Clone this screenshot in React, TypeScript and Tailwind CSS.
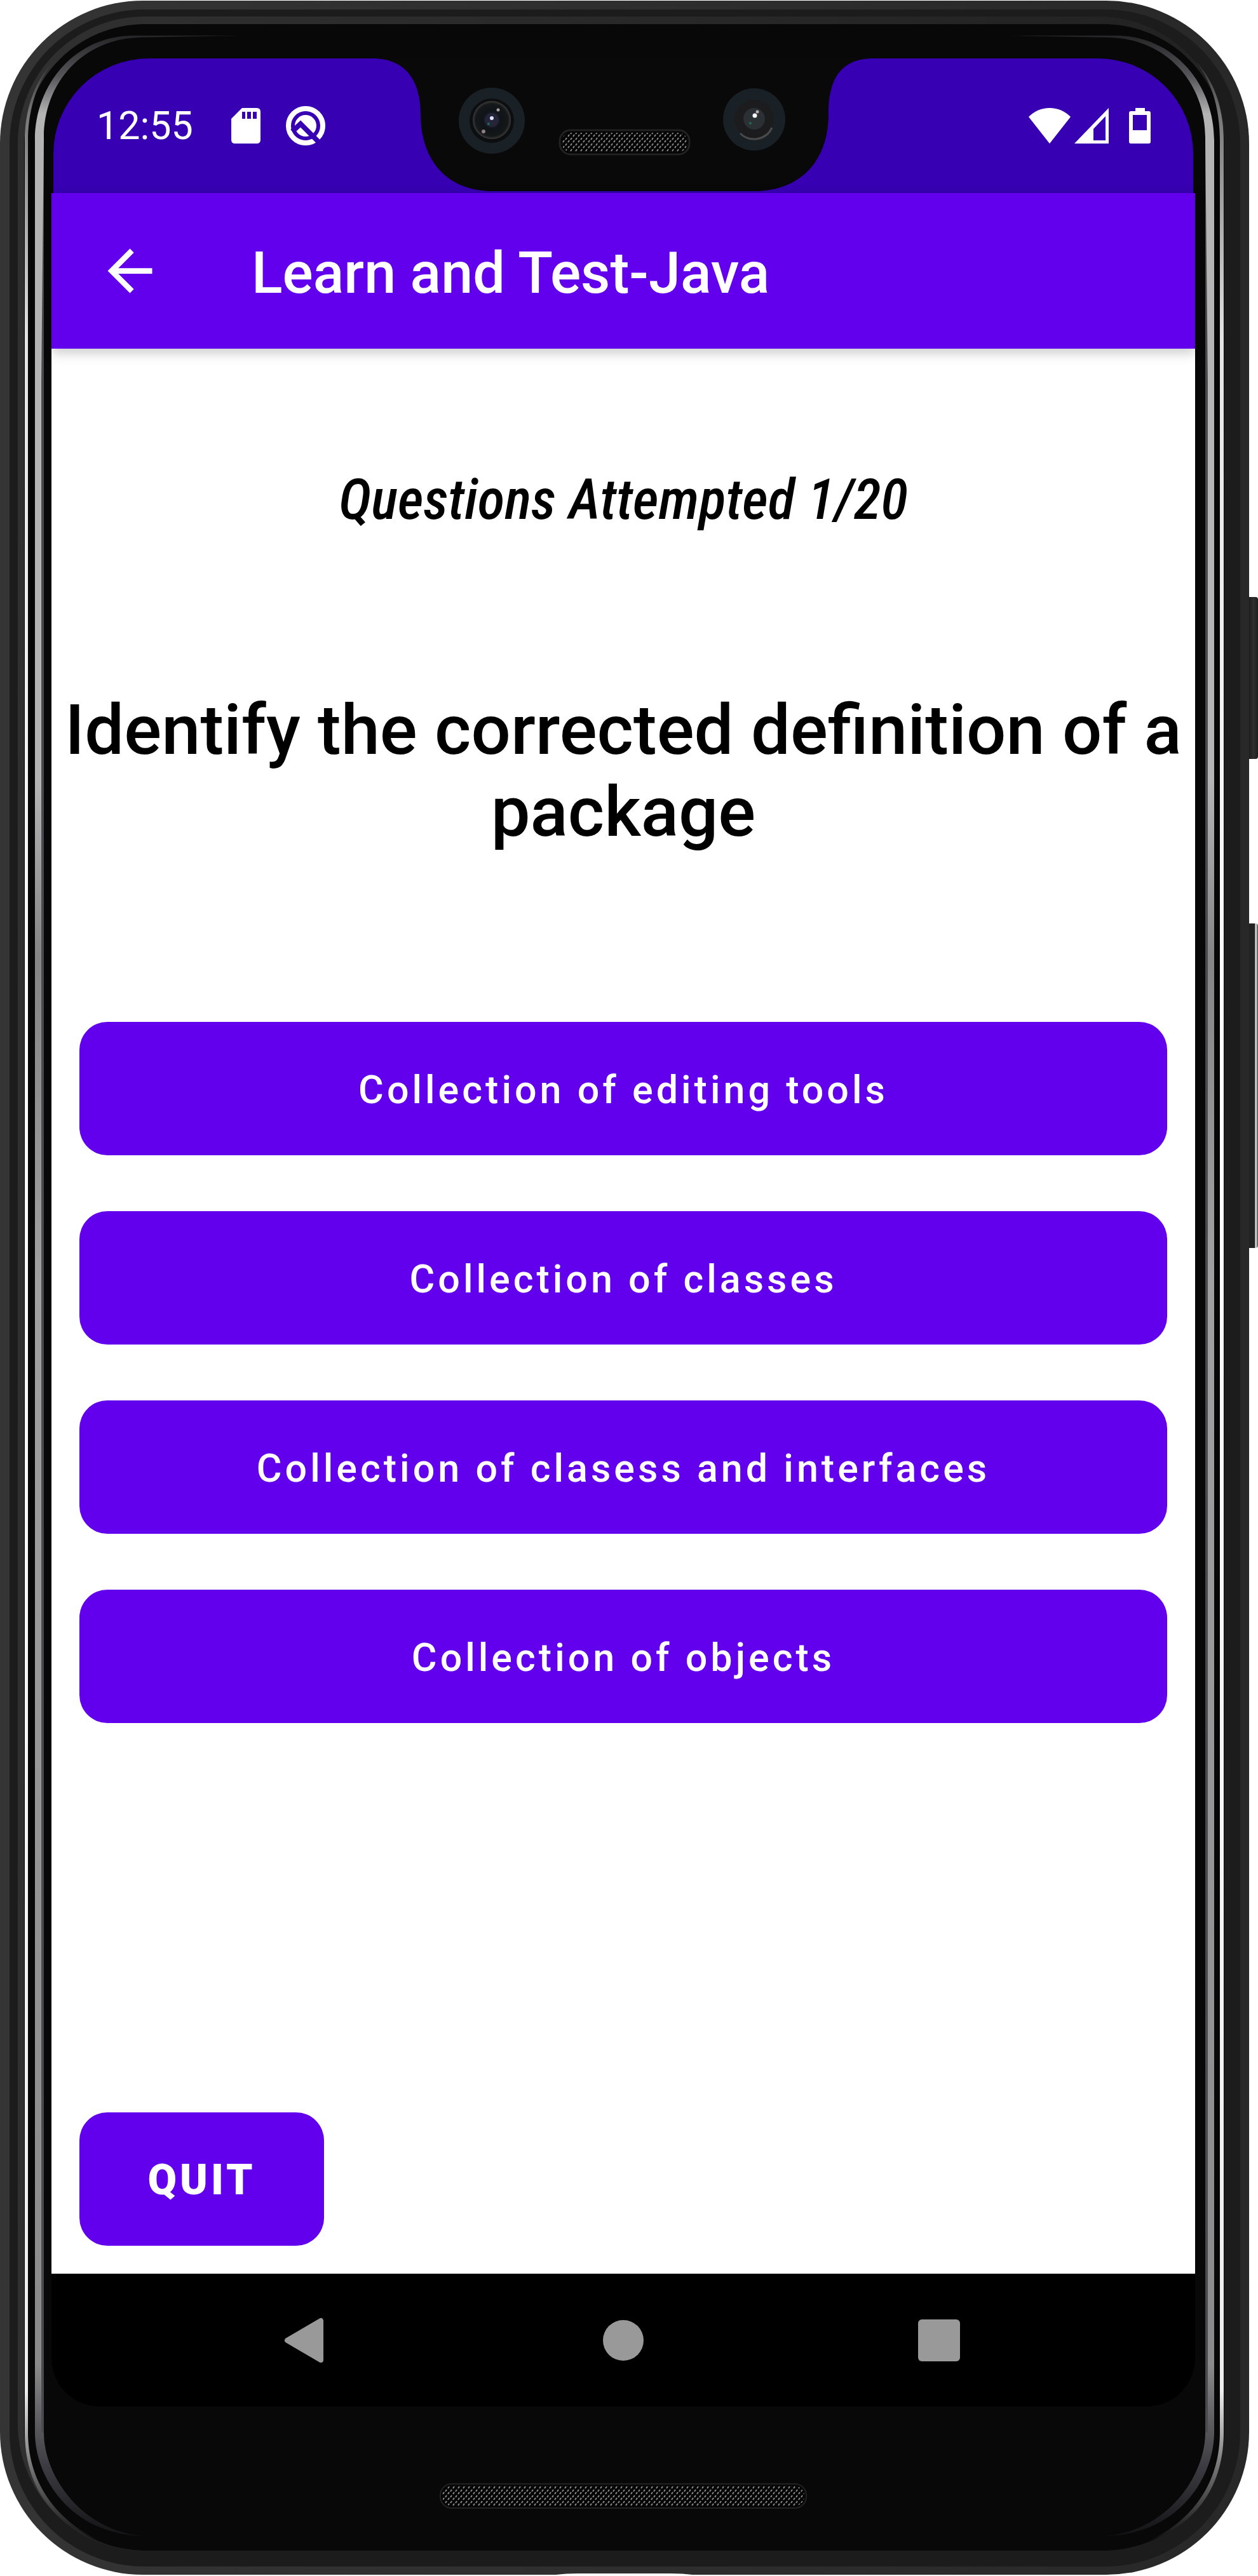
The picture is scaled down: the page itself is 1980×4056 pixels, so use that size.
const answers = [
  "Collection of editing tools",
  "Collection of classes",
  "Collection of clasess and interfaces",
  "Collection of objects",
];

function SdCardIcon() {
  return (
    <svg viewBox="0 0 46 56" className="h-14 w-[46px]" aria-hidden="true">
      <path
        fillRule="evenodd"
        fill="#fff"
        d="M17 0H40Q46 0 46 6V50Q46 56 40 56H6Q0 56 0 50V17ZM17 6V17H22V6ZM25 6V17H31V6ZM34 6V17H40V6Z"
      />
    </svg>
  );
}

function QIcon() {
  return (
    <svg viewBox="0 0 64 64" className="size-16" aria-hidden="true">
      <circle cx="31" cy="32" r="27" fill="none" stroke="#fff" strokeWidth="8" />
      <circle cx="31" cy="32" r="17" fill="#fff" />
      <path d="M10 41L23 29L52 58" fill="none" stroke="#3700b3" strokeWidth="8" />
    </svg>
  );
}

function WifiIcon() {
  return (
    <svg viewBox="0 0 66 56" className="h-14 w-[66px]" aria-hidden="true">
      <path d="M33 56L0 14Q14 0 33 0T66 14Z" fill="#fff" />
    </svg>
  );
}

function SignalIcon() {
  return (
    <svg viewBox="0 0 54 56" className="h-14 w-[54px]" aria-hidden="true">
      <path fillRule="evenodd" d="M54 0V56H0ZM49 13L30 33V51H49Z" fill="#fff" />
    </svg>
  );
}

function BatteryIcon() {
  return (
    <svg viewBox="0 0 34 56" className="h-14 w-[34px]" aria-hidden="true">
      <path
        fillRule="evenodd"
        fill="#fff"
        d="M10 0H25V5H31Q34 5 34 8V53Q34 56 31 56H3Q0 56 0 53V8Q0 5 3 5H10ZM6 11V35H28V11Z"
      />
    </svg>
  );
}

function Notch() {
  return (
    <svg viewBox="585 92 792 212" className="h-[212px] w-[792px] shrink-0" aria-hidden="true">
      <defs>
        <pattern id="mesh" width="8" height="9" patternUnits="userSpaceOnUse">
          <path d="M1 4L3 1M5 8L7 5" stroke="#8a8a8a" strokeWidth="2" />
        </pattern>
        <radialGradient id="lens">
          <stop offset="0" stopColor="#2a2a3a" />
          <stop offset="0.5" stopColor="#0f1418" />
          <stop offset="0.85" stopColor="#141819" />
          <stop offset="1" stopColor="#3a3a3a" />
        </radialGradient>
      </defs>
      <path
        d="M585 92C640 92 661 130 661 180C661 250 700 301 775 301H1185C1262 301 1303 250 1303 180C1303 130 1318 92 1374 92Z"
        fill="#090909"
      />
      <circle cx="773" cy="190" r="52" fill="#1a2126" />
      <circle cx="773" cy="190" r="35" fill="#0c0e10" />
      <circle cx="773" cy="189" r="30" fill="url(#lens)" />
      <circle cx="773" cy="189" r="11" fill="#25253a" />
      <circle cx="773" cy="186" r="3" fill="#dfe3ff" />
      <circle cx="783" cy="173" r="2.5" fill="#a89c9c" />
      <circle cx="760" cy="207" r="3" fill="#8f8080" />
      <circle cx="768" cy="195" r="2" fill="#1f6a58" />
      <circle cx="1186" cy="188" r="49" fill="#1a2126" />
      <circle cx="1186" cy="188" r="31" fill="#1c1c1e" />
      <path d="M1164 210A31 31 0 0 0 1214 201" fill="none" stroke="#4a4a4a" strokeWidth="3" />
      <circle cx="1186" cy="187" r="17" fill="#2b3034" />
      <circle cx="1187" cy="182" r="3.5" fill="#fff" />
      <circle cx="1191" cy="176" r="2.5" fill="#b8acac" />
      <circle cx="1180" cy="194" r="2" fill="#1f6a58" />
      <rect x="880" y="205" width="204" height="38" rx="17" fill="#050505" stroke="#222" strokeWidth="3" />
      <rect x="883" y="209" width="198" height="30" rx="14" fill="url(#mesh)" />
    </svg>
  );
}

/* Reflections that run down both long edges of the glass. */
function EdgeGlints() {
  return (
    <svg
      viewBox="0 0 1966 4054"
      preserveAspectRatio="none"
      className="pointer-events-none absolute inset-0 size-full"
      aria-hidden="true"
    >
      <defs>
        <linearGradient id="fade" gradientUnits="userSpaceOnUse" x1="0" y1="40" x2="0" y2="4000">
          <stop offset="0" stopColor="#1a1a1c" />
          <stop offset="0.02" stopColor="#55555a" />
          <stop offset="0.035" stopColor="#b4b4b4" />
          <stop offset="0.3" stopColor="#b4b4b4" />
          <stop offset="0.37" stopColor="#858585" />
          <stop offset="0.5" stopColor="#a0a0a0" />
          <stop offset="0.93" stopColor="#8a8a8a" />
          <stop offset="0.97" stopColor="#3c3c42" />
          <stop offset="1" stopColor="#111114" />
        </linearGradient>
        <linearGradient id="thin" gradientUnits="userSpaceOnUse" x1="0" y1="60" x2="0" y2="4000">
          <stop offset="0" stopColor="#161616" />
          <stop offset="0.03" stopColor="#777" />
          <stop offset="0.12" stopColor="#e4e4e4" />
          <stop offset="0.4" stopColor="#fff" />
          <stop offset="0.94" stopColor="#eee" />
          <stop offset="0.97" stopColor="#777" />
          <stop offset="1" stopColor="#111" />
        </linearGradient>
      </defs>
      <path
        d="M380 55H210C120 55 55 130 55 220V3830C55 3900 110 3990 225 3993C130 3985 69 3900 69 3830V215C69 130 130 60 220 58Z"
        fill="url(#fade)"
      />
      <path
        d="M1586 55H1756C1846 55 1911 130 1911 220V3830C1911 3900 1856 3990 1741 3993C1836 3985 1897 3900 1897 3830V215C1897 130 1836 60 1746 58Z"
        fill="url(#fade)"
      />
      <path d="M69 220V3830H65V600ZM1897 220V3830H1901V600Z" fill="#4a4a4e" />
      <path
        d="M85 95C50 130 39 180 39 220V3830C39 3900 70 3970 160 4002C80 3965 44 3900 44 3830V220C44 180 55 130 85 95Z"
        fill="url(#thin)"
      />
      <path
        d="M1881 95C1916 130 1926 180 1926 220V3830C1926 3900 1896 3970 1806 4002C1886 3965 1920 3900 1920 3830V220C1920 180 1911 130 1881 95Z"
        fill="url(#thin)"
      />
      <path d="M875 4054Q890 4052 910 4052H1055Q1075 4052 1090 4054Z" fill="#fff" />
    </svg>
  );
}

function SpeakerGrille() {
  return (
    <svg viewBox="0 0 578 40" className="h-10 w-[578px]" aria-hidden="true">
      <rect x="1" y="1" width="576" height="38" rx="18" fill="#050505" stroke="#222" strokeWidth="2" />
      <rect x="4" y="4" width="570" height="32" rx="16" fill="url(#mesh)" />
    </svg>
  );
}

function StatusBar() {
  return (
    <div className="mx-[3px] flex h-[212px] items-stretch overflow-hidden rounded-t-[150px] bg-[#3700b3]">
      <div className="flex flex-1 items-center pl-[68px]">
        <span className="text-[61px] leading-none text-white">12:55</span>
        <div className="ml-15 flex items-center gap-10">
          <SdCardIcon />
          <QIcon />
        </div>
      </div>
      <Notch />
      <div className="flex flex-1 items-center justify-end pr-[67px]">
        <WifiIcon />
        <span className="ml-1.5">
          <SignalIcon />
        </span>
        <span className="ml-8">
          <BatteryIcon />
        </span>
      </div>
    </div>
  );
}

export default function App() {
  return (
    <div className="flex bg-white py-px font-['Roboto',sans-serif]">
      <div className="relative min-w-0 flex-1 rounded-[225px] bg-linear-to-r from-[#343434] to-[#282828] pt-3.5 pr-3.5 pb-[13px] pl-[15px]">
        <div className="rounded-[212px] bg-[#1c1c1c] pt-[11px] pr-6 pb-[25px] pl-[13px]">
          <div className="rounded-[200px] bg-linear-to-r from-[#303030] to-[#222] pt-3 pr-px pl-2.5">
            <div className="rounded-[190px] bg-[#080808] pt-[54px] pr-[46px] pl-[43px]">
              <StatusBar />

              <header className="relative z-10 flex h-[245px] items-center bg-[#6200ee] pl-[71px] shadow-[0_6px_18px_rgba(0,0,0,0.22)]">
                <button type="button" aria-label="Back" className="size-[105px]">
                  <svg viewBox="0 0 24 24" className="size-full" aria-hidden="true">
                    <path d="M20 11H7.83l5.59-5.59L12 4l-8 8 8 8 1.41-1.41L7.83 13H20v-2z" fill="#fff" />
                  </svg>
                </button>
                <h1 className="ml-[139px] pt-2 text-[90px] leading-none font-medium text-white">
                  Learn and Test-Java
                </h1>
              </header>

              <main className="flex flex-col bg-white px-11 pt-[186px] pb-11">
                <p className="text-center font-['Roboto_Condensed','Liberation_Sans_Narrow','Roboto',sans-serif] text-[88px] leading-[104px] font-medium text-black italic">
                  Questions Attempted 1/20
                </p>
                <h2 className="-mx-11 mt-[246px] text-center text-[110px] leading-[129px] font-medium text-black">
                  Identify the corrected definition of a package
                </h2>
                <div className="mt-[266px] flex flex-col gap-[88px]">
                  {answers.map((answer) => (
                    <button
                      key={answer}
                      type="button"
                      className="h-[210px] rounded-[44px] bg-[#6200ee] pt-1 text-[61px] leading-none font-medium tracking-[5px] text-white"
                    >
                      {answer}
                    </button>
                  ))}
                </div>
                <button
                  type="button"
                  className="mt-[613px] h-[210px] w-[385px] rounded-[44px] bg-[#6200ee] pt-1 text-[66px] leading-none font-black tracking-[5px] text-white"
                >
                  QUIT
                </button>
              </main>

              <nav aria-label="System" className="flex h-[209px] items-center justify-center rounded-b-[76px] bg-black">
                <button type="button" aria-label="Back" className="flex w-[497px] justify-center">
                  <svg viewBox="0 0 76 76" className="size-[76px]" aria-hidden="true">
                    <path d="M59 7V69L6 38Z" fill="#999" stroke="#999" strokeWidth="8" strokeLinejoin="round" />
                  </svg>
                </button>
                <button type="button" aria-label="Home" className="flex w-[497px] justify-center">
                  <span className="size-16 rounded-full bg-[#999]" />
                </button>
                <button type="button" aria-label="Recent apps" className="flex w-[497px] justify-center">
                  <span className="size-[66px] rounded-md bg-[#999]" />
                </button>
              </nav>

              <div className="flex justify-center pt-[121px] pb-[66px]">
                <SpeakerGrille />
              </div>
            </div>
          </div>
        </div>
        <EdgeGlints />
      </div>

      <div className="flex w-3.5 flex-col pt-[939px]" aria-hidden="true">
        <div className="h-[255px] rounded-r-sm bg-linear-to-r from-[#1c1c1c] via-[#2e302f] to-[#1c1c1c]" />
        <div className="mt-[259px] h-[511px] rounded-r-sm bg-linear-to-r from-[#222] from-60% via-[#eee] via-75% to-[#444]" />
      </div>
    </div>
  );
}
